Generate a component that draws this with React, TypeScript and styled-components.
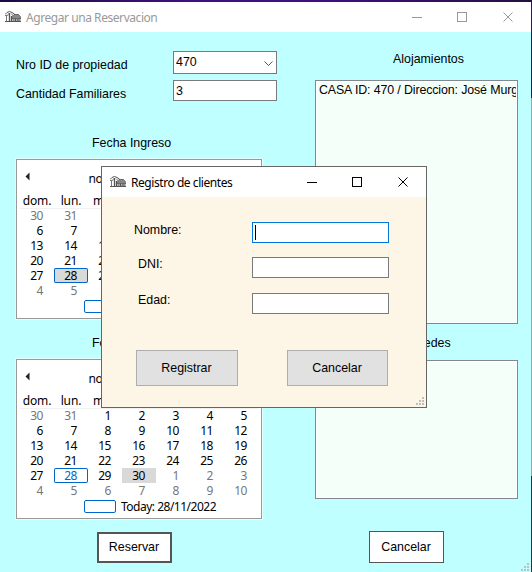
import React from "react";
import styled, { createGlobalStyle, css } from "styled-components";

const Global = createGlobalStyle`
  * { box-sizing: border-box; }
  body { margin: 0; overflow: hidden; }
`;

const sans = css`
  font: 12.4px/15px "Liberation Sans", Arial, sans-serif;
  color: #000;
`;
const ui = css`
  font: 12px/15px "Noto Sans", "Open Sans", sans-serif;
  letter-spacing: -0.44px;
`;

const Window = styled.div`
  ${sans}
  position: relative;
  width: 532px;
  height: 572px;
  display: flex;
  flex-direction: column;
  background: #c0ffff;
`;
const TopEdge = styled.div`
  height: 2px;
  flex: none;
  background: linear-gradient(90deg, #1d0b40, #40107c 35%, #430d82 60%, #241040);
`;
const Middle = styled.div`
  flex: 1;
  display: flex;
`;
const Frame = styled.div`
  width: 531px;
  display: flex;
  flex-direction: column;
`;
const SideEdge = styled.div`
  width: 1px;
  background: linear-gradient(#2b1950 0 96px, #9aa5a8 96px 474px, #163c40 474px);
`;
const TitleBar = styled.header<{ $active?: boolean }>`
  ${ui}
  flex: none;
  height: 30px;
  display: flex;
  align-items: center;
  background: #fff;
  color: ${(p) => (p.$active ? "#000" : "#999")};
  padding-left: ${(p) => (p.$active ? 8 : 5)}px;
  padding-right: 17px;
`;
const Caption = styled.span`
  flex: 1;
  margin-left: 5px;
  white-space: nowrap;
`;
const Controls = styled.svg`
  display: block;
  flex: none;
`;
const Body = styled.main`
  flex: 1;
  display: grid;
  grid-template-columns: 299px 1fr;
  padding-left: 16px;
`;
const Column = styled.section<{ $top: number }>`
  display: flex;
  flex-direction: column;
  align-items: flex-start;
  padding-top: ${(p) => p.$top}px;
`;
const Field = styled.label<{ $gap: number }>`
  display: grid;
  grid-template-columns: 157px 104px;
  margin-bottom: ${(p) => p.$gap}px;
  & > span { padding-top: 7px; }
`;
const Combo = styled.div`
  height: 23px;
  display: flex;
  justify-content: space-between;
  align-items: flex-start;
  padding: 3px 3px 0 2px;
  background: #fff;
  border: 1px solid #7a7a7a;
`;
const Box = styled.div`
  height: 21px;
  padding: 3px 2px 0;
  background: #fff;
  border: 1px solid #7a7a7a;
`;
const Heading = styled.h2<{ $left: number; $gap: number }>`
  ${sans}
  margin: 0 0 ${(p) => p.$gap}px ${(p) => p.$left}px;
`;
const List = styled.div<{ $height: number; $gap: number }>`
  width: 203px;
  height: ${(p) => p.$height}px;
  margin-bottom: ${(p) => p.$gap}px;
  padding: 2px 0 0 3px;
  overflow: hidden;
  white-space: nowrap;
  border: 1px solid #828790;
  background: #f5fffa;
  box-shadow: inset 0 0 0 1px #fff;
`;
const ListItem = styled.div`
  width: 197px;
  overflow: hidden;
  letter-spacing: -0.12px;
`;
const Button = styled.button<{ $kind: "primary" | "plain" | "dialog"; $width?: number }>`
  ${sans}
  padding: 0 1px 0 0;
  width: ${(p) => p.$width ?? 75}px;
  height: ${(p) => (p.$kind === "dialog" ? 36 : p.$kind === "plain" ? 32 : 31)}px;
  background: ${(p) => (p.$kind === "dialog" ? "#e1e1e1" : "#fff")};
  border: ${(p) =>
    p.$kind === "primary" ? "2px solid #555" : p.$kind === "plain" ? "1px solid #555" : "1px solid #adadad"};
  margin-left: ${(p) => (p.$kind === "primary" ? 81 : p.$kind === "plain" ? 54 : 0)}px;
`;

const CalendarBox = styled.div<{ $gap: number }>`
  ${ui}
  width: 246px;
  height: 160px;
  flex: none;
  margin-bottom: ${(p) => p.$gap}px;
  padding: 11px 3px 0;
  background: #fff;
  border: 1px solid #999;
  box-shadow: 0 0 0 1px #e4ffff, 1px 1px 0 #fff;
`;
const Month = styled.div`
  display: grid;
  grid-template-columns: 14px 1fr 14px;
  height: 21px;
  text-align: center;
`;
const Arrow = styled.svg`
  display: block;
  margin: 1px 0 0 5px;
`;
const Week = styled.div`
  display: grid;
  grid-template-columns: repeat(7, 34px);
  height: 15px;
`;
const WeekHead = styled(Week)`
  height: 16px;
  margin-top: 1px;
  margin-bottom: -1px;
  text-align: center;
  letter-spacing: -0.1px;
  box-shadow: inset 0 -1px #f1f1f1;
`;
type Mark = "none" | "today" | "selected" | "both";
const Day = styled.span<{ $out: boolean; $mark: Mark }>`
  height: 15px;
  line-height: 15px;
  padding-right: 11px;
  text-align: right;
  border-radius: ${(p) => (p.$mark === "selected" ? 0 : 2)}px;
  color: ${(p) => (p.$mark === "today" ? "#0066cc" : p.$out ? "#777" : "#000")};
  background: ${(p) => (p.$mark === "selected" || p.$mark === "both" ? "#d9d9d9" : "transparent")};
  box-shadow: ${(p) => (p.$mark === "today" || p.$mark === "both" ? "inset 0 0 0 1px #0066cc" : "none")};
`;
const Today = styled.div`
  display: flex;
  align-items: center;
  gap: 5px;
  height: 15px;
  margin: 1px 0 0 64px;
  letter-spacing: -0.5px;
`;
const TodayMark = styled.i`
  width: 32px;
  height: 13px;
  border: 1px solid #0066cc;
  border-radius: 2px;
`;

const Dialog = styled.div`
  position: absolute;
  left: 101px;
  top: 166px;
  width: 326px;
  height: 242px;
  border: 1px solid #666;
  background: #fdf5e6;
`;
const Form = styled.div`
  display: flex;
  flex-direction: column;
  padding: 25px 37px 0 32px;
`;
const FormRow = styled.label<{ $indent: number; $gap: number; $drop: number }>`
  display: grid;
  grid-template-columns: 1fr 137px;
  margin-bottom: ${(p) => p.$gap}px;
  & > span {
    padding-left: ${(p) => p.$indent}px;
    margin-top: ${(p) => p.$drop}px;
  }
`;
const Input = styled.div<{ $focus?: boolean }>`
  height: 21px;
  padding: 2px;
  background: #fff;
  border: 1px solid ${(p) => (p.$focus ? "#0078d7" : "#7a7a7a")};
`;
const Caret = styled.i`
  display: block;
  width: 1px;
  height: 15px;
  background: #000;
`;
const Actions = styled.div`
  display: flex;
  justify-content: space-between;
  padding: 0 1px 0 2px;
`;
const GripSvg = styled.svg<{ $right: number; $bottom: number }>`
  position: absolute;
  right: ${(p) => p.$right}px;
  bottom: ${(p) => p.$bottom}px;
`;

const Grip = ({ right, bottom }: { right: number; bottom: number }) => (
  <GripSvg $right={right} $bottom={bottom} width="8" height="8" fill="#bfbfbf" shapeRendering="crispEdges">
    <path d="M6 0h2v2h-2zM3 3h2v2h-2zM6 3h2v2h-2zM0 6h2v2h-2zM3 6h2v2h-2zM6 6h2v2h-2z" />
  </GripSvg>
);

const HouseIcon = () => (
  <svg width="16" height="14" viewBox="0 0 16 14" fill="none" stroke="#555">
    <path d="M0 4.500 2 2.500 4.500 1.500 7 2.500 9.500 4" />
    <path d="M0 5.500h2M3.500 3.500 2.500 6M6 3.500 8 5.500M1.500 6v5" stroke="#777" />
    <path d="M4.500 3v8M6.500 6v5" strokeWidth="1.300" />
    <path d="M7 6.500 9 4.500h4.500l2.500 3v1H7z" fill="#888" stroke="#555" strokeWidth=".8" />
    <path d="M8 8.500h7v3H8z" fill="#aaa" stroke="#666" strokeWidth=".8" />
    <path d="M10.500 8.500v3M13 8.500v3M0 11.500h16" stroke="#555" />
  </svg>
);

const WindowControls = ({ color }: { color: string }) => (
  <Controls width="102" height="12" viewBox="0 0 102 12" fill="none" stroke={color}>
    <path d="M0 6.500h10M45.500 1.500h9v9h-9z" shapeRendering="crispEdges" />
    <path d="M91.500 1.500l9 9M100.500 1.500l-9 9" />
  </Controls>
);

const names = ["dom.", "lun.", "mar.", "mié.", "jue.", "vie.", "sáb."];
const weeks = [
  [30, 31, 1, 2, 3, 4, 5],
  [6, 7, 8, 9, 10, 11, 12],
  [13, 14, 15, 16, 17, 18, 19],
  [20, 21, 22, 23, 24, 25, 26],
  [27, 28, 29, 30, 1, 2, 3],
  [4, 5, 6, 7, 8, 9, 10],
];

const Calendar = ({ selected, gap }: { selected: number; gap: number }) => {
  const markOf = (n: number, out: boolean): Mark => {
    if (out) return "none";
    if (n === 28) return selected === 28 ? "both" : "today";
    return n === selected ? "selected" : "none";
  };
  return (
    <CalendarBox $gap={gap}>
      <Month>
        <Arrow width="5" height="9"><path d="M4.500 .5v8L.5 4.500z" fill="#222" /></Arrow>
        <span>noviembre de 2022</span>
      </Month>
      <WeekHead>{names.map((n) => <span key={n}>{n}</span>)}</WeekHead>
      {weeks.map((week, w) => (
        <Week key={w}>
          {week.map((n, i) => {
            const out = (w === 0 && n > 20) || (w > 3 && n < 20);
            return <Day key={i} $out={out} $mark={markOf(n, out)}>{n}</Day>;
          })}
        </Week>
      ))}
      <Today><TodayMark />Today: 28/11/2022</Today>
    </CalendarBox>
  );
};

export default function App() {
  return (
    <>
      <Global />
      <Window>
        <TopEdge />
        <Middle>
          <Frame>
            <TitleBar>
              <HouseIcon />
              <Caption>Agregar una Reservacion</Caption>
              <WindowControls color="#999" />
            </TitleBar>
            <Body>
              <Column $top={19}>
                <Field $gap={6}>
                  <span>Nro ID de propiedad</span>
                  <Combo>
                    470
                    <svg width="9" height="15" fill="none" stroke="#555"><path d="M.5 6.500l4 4 4-4" /></svg>
                  </Combo>
                </Field>
                <Field $gap={34}>
                  <span>Cantidad Familiares</span>
                  <Box>3</Box>
                </Field>
                <Heading $left={76} $gap={8}>Fecha Ingreso</Heading>
                <Calendar selected={28} gap={17} />
                <Heading $left={76} $gap={8}>Fecha Egreso</Heading>
                <Calendar selected={30} gap={13} />
                <Button $kind="primary">Reservar</Button>
              </Column>
              <Column $top={20}>
                <Heading $left={78} $gap={13}>Alojamientos</Heading>
                <List $height={244} $gap={12}>
                  <ListItem>CASA ID: 470 / Direccion: José Murguia</ListItem>
                </List>
                <Heading $left={73} $gap={9}>Huespedes</Heading>
                <List $height={139} $gap={32} />
                <Button $kind="plain">Cancelar</Button>
              </Column>
            </Body>
          </Frame>
          <SideEdge />
        </Middle>
        <Grip right={3} bottom={1} />
        <Dialog>
          <TitleBar $active>
            <HouseIcon />
            <Caption>Registro de clientes</Caption>
            <WindowControls color="#000" />
          </TitleBar>
          <Form>
            <FormRow $indent={0} $gap={14} $drop={1}>
              <span>Nombre:</span>
              <Input $focus><Caret /></Input>
            </FormRow>
            <FormRow $indent={4} $gap={15} $drop={0}>
              <span>DNI:</span>
              <Input />
            </FormRow>
            <FormRow $indent={4} $gap={36} $drop={0}>
              <span>Edad:</span>
              <Input />
            </FormRow>
            <Actions>
              <Button $kind="dialog" $width={102}>Registrar</Button>
              <Button $kind="dialog" $width={101}>Cancelar</Button>
            </Actions>
          </Form>
          <Grip right={2} bottom={2} />
        </Dialog>
      </Window>
    </>
  );
}
